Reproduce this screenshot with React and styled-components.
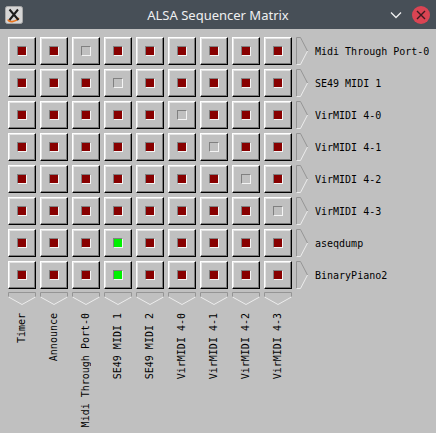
import React from "react";
import styled, { createGlobalStyle } from "styled-components";

const GlobalStyle = createGlobalStyle`
    html, body {
        margin: 0;
        padding: 0;
        background: #c0c0c0;
    }
    body {
        font-family: "DejaVu Sans Mono", "Liberation Mono", monospace;
    }
`;

const outputs = [
    "Midi Through Port-0",
    "SE49 MIDI 1",
    "VirMIDI 4-0",
    "VirMIDI 4-1",
    "VirMIDI 4-2",
    "VirMIDI 4-3",
    "aseqdump",
    "BinaryPiano2",
];

const inputs = [
    "Timer",
    "Announce",
    "Midi Through Port-0",
    "SE49 MIDI 1",
    "SE49 MIDI 2",
    "VirMIDI 4-0",
    "VirMIDI 4-1",
    "VirMIDI 4-2",
    "VirMIDI 4-3",
];

// which input column is the port itself (no connection possible)
const selfColumn = [2, 3, 5, 6, 7, 8, -1, -1];
// connected pairs [row, col]
const connected = ["6-3", "7-3"];

const getState = (row, col) => {
    if (selfColumn[row] === col) return "off";
    if (connected.includes(`${row}-${col}`)) return "on";
    return "idle";
};

function AppIcon() {
    return (
        <svg width="18" height="18" viewBox="0 0 18 18">
            <rect x="0.5" y="0.5" width="17" height="17" rx="2" fill="#d6d6d6" stroke="#a8a8a8" />
            <path d="M3 13.5 C4 16.5 10 16.5 14 12" stroke="#e8731c" strokeWidth="1.8" fill="none" />
            <path d="M4.5 3.5 L13.5 14 M13 3.5 L4.5 14" stroke="#1c1c1c" strokeWidth="2" />
        </svg>
    );
}

function ArrowRight() {
    return (
        <svg width="12" height="28" viewBox="0 0 12 28">
            <polyline points="0.5,27.5 0.5,0.5 4.5,0.5 11.5,14" fill="none" stroke="#959595" />
            <polyline points="11.5,14 4.5,27.5 0.5,27.5" fill="none" stroke="#ececec" />
        </svg>
    );
}

function ArrowDown() {
    return (
        <svg width="28" height="13" viewBox="0 0 28 13">
            <polyline points="0.5,5 0.5,0.5 27.5,0.5 27.5,5" fill="none" stroke="#959595" />
            <polyline points="0.5,5 14,12.5 27.5,5" fill="none" stroke="#ececec" />
        </svg>
    );
}

function App() {
    return (
        <>
            <GlobalStyle />
            <Window>
                <TitleBar>
                    <TitleLeft>
                        <AppIcon />
                    </TitleLeft>
                    <Title>ALSA Sequencer Matrix</Title>
                    <TitleRight>
                        <svg width="12" height="8" viewBox="0 0 12 8">
                            <polyline points="1,1.5 6,6.5 11,1.5" fill="none" stroke="#eff0f1" strokeWidth="1.3" />
                        </svg>
                        <CloseButton>
                            <svg width="10" height="10" viewBox="0 0 10 10">
                                <path d="M1 1 L9 9 M9 1 L1 9" stroke="#3b1a20" strokeWidth="1.4" />
                            </svg>
                        </CloseButton>
                    </TitleRight>
                </TitleBar>

                <Matrix>
                    {outputs.map((name, row) => (
                        <Row key={name}>
                            {inputs.map((input, col) => (
                                <Cell key={input}>
                                    <Lamp state={getState(row, col)} />
                                </Cell>
                            ))}
                            <ArrowRight />
                            <RowLabel>{name}</RowLabel>
                        </Row>
                    ))}
                    <ArrowRow>
                        {inputs.map((input) => (
                            <ArrowDown key={input} />
                        ))}
                    </ArrowRow>
                    <LabelRow>
                        {inputs.map((input) => (
                            <ColumnCell key={input}>
                                <ColumnLabel>{input}</ColumnLabel>
                            </ColumnCell>
                        ))}
                    </LabelRow>
                </Matrix>
            </Window>
        </>
    );
}

const Window = styled.div`
    width: 436px;
    height: 433px;
    display: flex;
    flex-direction: column;
    background: #c0c0c0;
    overflow: hidden;
`;

const TitleBar = styled.div`
    height: 29px;
    flex-shrink: 0;
    background-color: #474f57;
    display: grid;
    grid-template-columns: 1fr auto 1fr;
    align-items: center;
`;

const TitleLeft = styled.div`
    display: flex;
    align-items: center;
    padding-left: 5px;
    padding-top: 1px;
`;

const Title = styled.div`
    font-family: "Noto Sans", "Open Sans", sans-serif;
    font-size: 13px;
    color: #eff0f1;
    padding-top: 1px;
`;

const TitleRight = styled.div`
    display: flex;
    align-items: center;
    justify-content: flex-end;
    gap: 10px;
    padding-right: 6px;
    padding-top: 1px;
`;

const CloseButton = styled.div`
    width: 18px;
    height: 18px;
    border-radius: 50%;
    background-color: #da4453;
    display: flex;
    align-items: center;
    justify-content: center;
`;

const Matrix = styled.div`
    display: flex;
    flex-direction: column;
    gap: 4px;
    padding: 8px 0 0 8px;
`;

const Row = styled.div`
    display: flex;
    align-items: center;
    gap: 4px;
    height: 28px;
`;

const Cell = styled.div`
    width: 28px;
    height: 28px;
    box-sizing: border-box;
    background-color: #c0c0c0;
    border-top: 1px solid #ffffff;
    border-left: 1px solid #ffffff;
    border-right: 1px solid #000000;
    border-bottom: 1px solid #000000;
    box-shadow: inset -1px -1px 0 #7a7a7a, inset 1px 1px 0 #e4e4e4;
    display: flex;
    align-items: center;
    justify-content: center;
    padding: 0 1px 1px 0;
`;

const lampColors = {
    idle: "#880000",
    on: "#00f000",
    off: "#c0c0c0",
};

const Lamp = styled.div`
    width: 10px;
    height: 10px;
    box-sizing: border-box;
    border-top: 1px solid #808080;
    border-left: 1px solid #808080;
    border-right: 1px solid #f4f4f4;
    border-bottom: 1px solid #f4f4f4;
    background-color: ${(props) => lampColors[props.state]};
`;

const RowLabel = styled.div`
    font-size: 10px;
    color: #000000;
    padding-left: 3px;
    white-space: nowrap;
`;

const ArrowRow = styled.div`
    display: flex;
    gap: 4px;
    margin-top: -1px;
    svg {
        display: block;
    }
`;

const LabelRow = styled.div`
    display: flex;
    gap: 4px;
    margin-top: 4px;
`;

const ColumnCell = styled.div`
    width: 28px;
    display: flex;
    justify-content: center;
    align-items: flex-start;
`;

const ColumnLabel = styled.div`
    font-size: 10px;
    line-height: 12px;
    color: #000000;
    white-space: nowrap;
    writing-mode: vertical-rl;
    transform: rotate(180deg);
`;

export default App;
